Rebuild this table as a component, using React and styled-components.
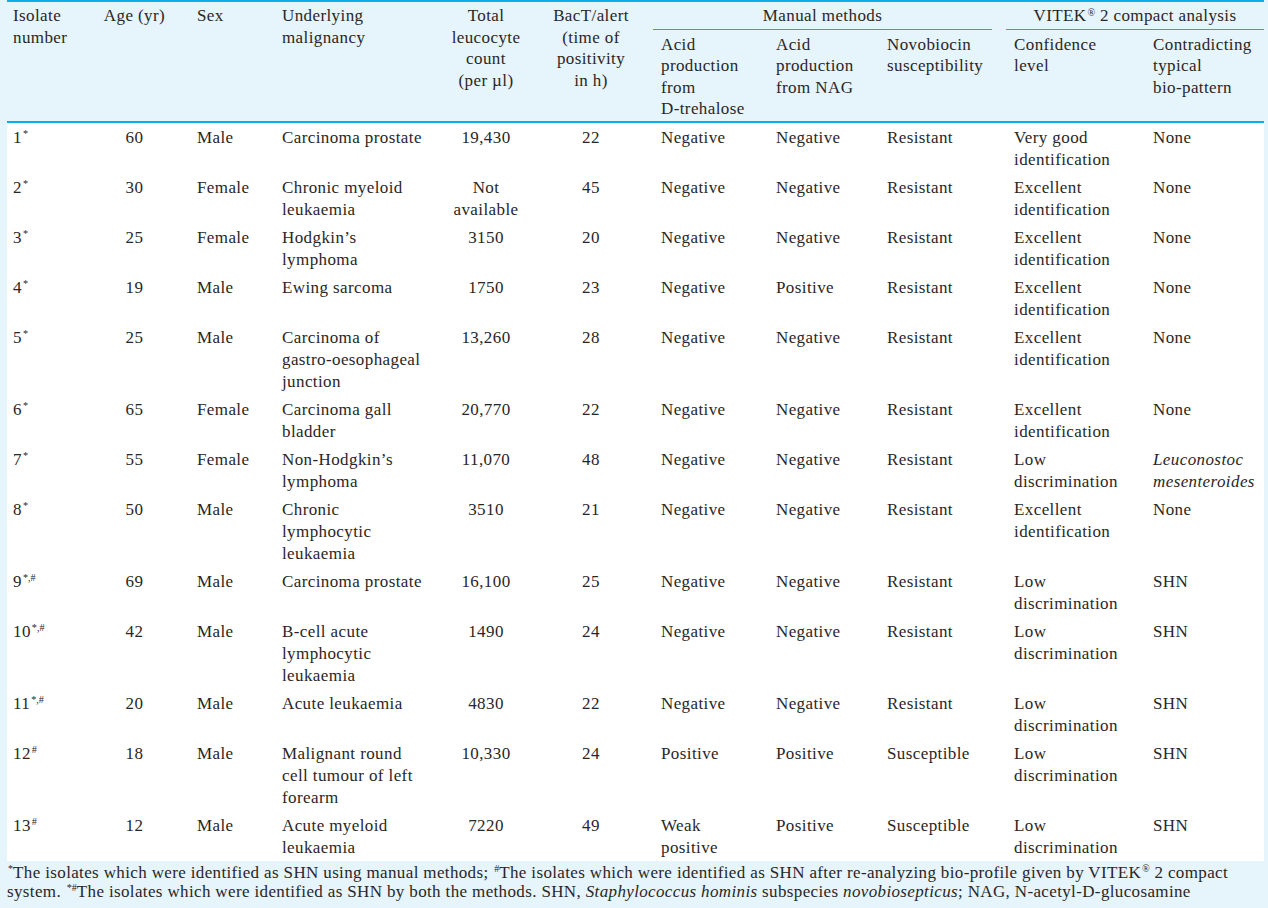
import React from "react";
import styled, { createGlobalStyle } from "styled-components";

const GlobalStyle = createGlobalStyle`
  html, body {
    margin: 0;
    padding: 0;
    background: #e6f4fc;
  }
  body {
    font-family: "Liberation Serif", "Times New Roman", serif;
    color: #2a2627;
  }
`;

const Page = styled.div`
  background: #e6f4fc;
  padding: 0 4px 0 7px;
  font-family: "Liberation Serif", "Times New Roman", serif;
  font-size: 17px;
  letter-spacing: 0.4px;
  line-height: 21.5px;
  color: #2a2627;
`;

const Table = styled.table`
  width: 1257px;
  table-layout: fixed;
  border-collapse: separate;
  border-spacing: 0;
  border-top: 2px solid #0aaee8;
`;

const Col = styled.col`
  width: ${(p) => p.$w}px;
`;

const HeadCell = styled.th`
  font-weight: normal;
  vertical-align: top;
  text-align: ${(p) => (p.$center ? "center" : "left")};
  padding: ${(p) => (p.$sub ? "3.5px" : "3px")} ${(p) => p.$pr ?? 6}px 1px ${(p) => p.$pl ?? 6}px;
  border-bottom: 2px solid #0aaee8;
`;

const GroupCell = styled.th`
  font-weight: normal;
  vertical-align: top;
  padding: 3px 0 0;
`;

const GroupLabel = styled.div`
  text-align: center;
  padding-bottom: 2.5px;
  border-bottom: 1px solid #0aaee8;
  margin: ${(p) => p.$margin};
`;

const BodyRow = styled.tr`
  background: #ffffff;
`;

const Cell = styled.td`
  vertical-align: top;
  text-align: ${(p) => (p.$center ? "center" : "left")};
  padding: 4px ${(p) => p.$pr ?? 6}px 2px ${(p) => p.$pl ?? 6}px;
  line-height: 22px;
  font-style: ${(p) => (p.$italic ? "italic" : "normal")};
`;

const Sup = styled.sup`
  font-size: 0.6em;
  line-height: 0;
  vertical-align: baseline;
  position: relative;
  top: -0.5em;
  margin-left: 1px;
  letter-spacing: 0;
`;

const NoWrap = styled.span`
  white-space: nowrap;
`;

const Footnote = styled.p`
  margin: 0;
  padding: 2px 20px 3px 0;
  line-height: 19px;
  letter-spacing: 0.36px;
`;

const Em = styled.i`
  font-style: italic;
`;

const cols = [90, 94, 85, 157, 103, 117, 117, 111, 127, 139, 117];

const rows = [
  ["1", "*", "60", "Male", "Carcinoma prostate", "19,430", "22", "Negative", "Negative", "Resistant", "Very good identification", "None"],
  ["2", "*", "30", "Female", "Chronic myeloid leukaemia", "Not available", "45", "Negative", "Negative", "Resistant", "Excellent identification", "None"],
  ["3", "*", "25", "Female", "Hodgkin’s lymphoma", "3150", "20", "Negative", "Negative", "Resistant", "Excellent identification", "None"],
  ["4", "*", "19", "Male", "Ewing sarcoma", "1750", "23", "Negative", "Positive", "Resistant", "Excellent identification", "None"],
  ["5", "*", "25", "Male", "Carcinoma of gastro-oesophageal junction", "13,260", "28", "Negative", "Negative", "Resistant", "Excellent identification", "None"],
  ["6", "*", "65", "Female", "Carcinoma gall bladder", "20,770", "22", "Negative", "Negative", "Resistant", "Excellent identification", "None"],
  ["7", "*", "55", "Female", "Non-Hodgkin’s lymphoma", "11,070", "48", "Negative", "Negative", "Resistant", "Low discrimination", "Leuconostoc mesenteroides", true],
  ["8", "*", "50", "Male", "Chronic lymphocytic leukaemia", "3510", "21", "Negative", "Negative", "Resistant", "Excellent identification", "None"],
  ["9", "*,#", "69", "Male", "Carcinoma prostate", "16,100", "25", "Negative", "Negative", "Resistant", "Low discrimination", "SHN"],
  ["10", "*,#", "42", "Male", "B-cell acute lymphocytic leukaemia", "1490", "24", "Negative", "Negative", "Resistant", "Low discrimination", "SHN"],
  ["11", "*,#", "20", "Male", "Acute leukaemia", "4830", "22", "Negative", "Negative", "Resistant", "Low discrimination", "SHN"],
  ["12", "#", "18", "Male", "Malignant round cell tumour of left forearm", "10,330", "24", "Positive", "Positive", "Susceptible", "Low discrimination", "SHN"],
  ["13", "#", "12", "Male", "Acute myeloid leukaemia", "7220", "49", "Weak positive", "Positive", "Susceptible", "Low discrimination", "SHN"],
];

export default function App() {
  return (
    <>
      <GlobalStyle />
      <Page>
        <Table>
          <colgroup>
            {cols.map((w, i) => (
              <Col key={i} $w={w} />
            ))}
          </colgroup>
          <thead>
            <tr>
              <HeadCell rowSpan={2}>Isolate number</HeadCell>
              <HeadCell rowSpan={2} $center $pr={25}>Age (yr)</HeadCell>
              <HeadCell rowSpan={2}>Sex</HeadCell>
              <HeadCell rowSpan={2}>Underlying malignancy</HeadCell>
              <HeadCell rowSpan={2} $center $pl={13} $pr={10}>
                Total leucocyte count <NoWrap>(per µl)</NoWrap>
              </HeadCell>
              <HeadCell rowSpan={2} $center $pl={13} $pr={20}>BacT/alert (time of positivity in h)</HeadCell>
              <GroupCell colSpan={3}>
                <GroupLabel $margin="0 16px 0 0">Manual methods</GroupLabel>
              </GroupCell>
              <GroupCell colSpan={2}>
                <GroupLabel $margin="0 0 0 -2px">
                  VITEK<Sup>®</Sup> 2 compact analysis
                </GroupLabel>
              </GroupCell>
            </tr>
            <tr>
              <HeadCell $sub $pl={8} $pr={14}>
                Acid production from <NoWrap>D-trehalose</NoWrap>
              </HeadCell>
              <HeadCell $sub>Acid production from NAG</HeadCell>
              <HeadCell $sub>Novobiocin susceptibility</HeadCell>
              <HeadCell $sub $pr={20}>Confidence level</HeadCell>
              <HeadCell $sub>
                Contradicting typical <NoWrap>bio-pattern</NoWrap>
              </HeadCell>
            </tr>
          </thead>
          <tbody>
            {rows.map((r) => (
              <BodyRow key={r[0]}>
                <Cell>
                  {r[0]}
                  <Sup>{r[1]}</Sup>
                </Cell>
                <Cell $center $pr={25}>{r[2]}</Cell>
                <Cell>{r[3]}</Cell>
                <Cell>{r[4]}</Cell>
                <Cell $center $pl={13} $pr={10}>{r[5]}</Cell>
                <Cell $center $pl={13} $pr={20}>{r[6]}</Cell>
                <Cell $pl={8} $pr={14}>{r[7]}</Cell>
                <Cell>{r[8]}</Cell>
                <Cell>{r[9]}</Cell>
                <Cell $pr={20}>{r[10]}</Cell>
                <Cell $italic={r[12]}>{r[11]}</Cell>
              </BodyRow>
            ))}
          </tbody>
        </Table>
        <Footnote>
          <Sup>*</Sup>The isolates which were identified as SHN using manual methods; <Sup>#</Sup>The isolates which were
          identified as SHN after re-analyzing bio-profile given by VITEK<Sup>®</Sup> 2 compact system.{" "}
          <Sup>*#</Sup>The isolates which were identified as SHN by both the methods. SHN, <Em>Staphylococcus hominis</Em>{" "}
          subspecies <Em>novobiosepticus</Em>; NAG, <NoWrap>N-acetyl-D-glucosamine</NoWrap>
        </Footnote>
      </Page>
    </>
  );
}
